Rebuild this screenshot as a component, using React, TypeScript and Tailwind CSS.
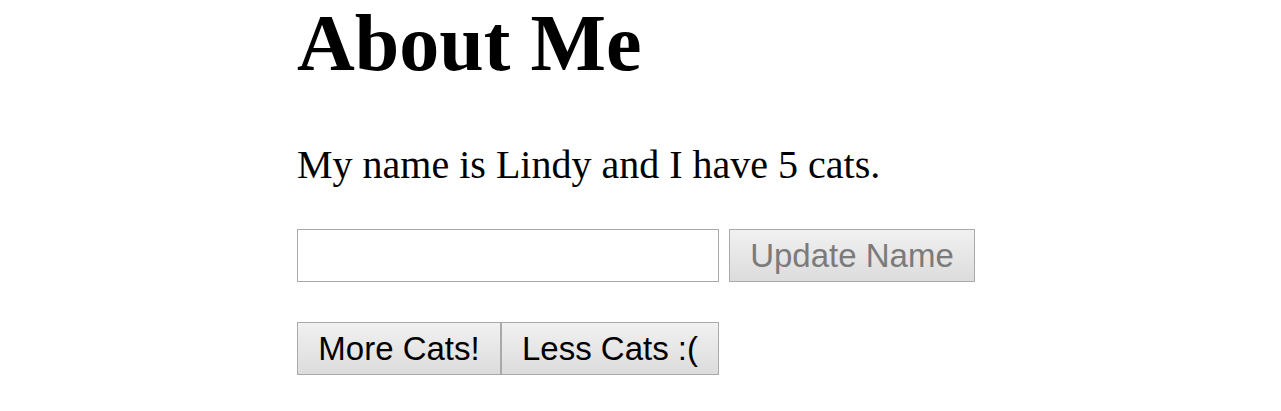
import React, { useState } from 'react';

const serif = "font-['Liberation_Serif','Times_New_Roman',serif]";
const sans = "font-['Liberation_Sans',Arial,sans-serif]";

const btn =
  "flex items-center justify-center h-[53px] border border-[#a9a9a9] bg-gradient-to-b from-[#f1f1f1] to-[#dcdcdc] text-[33px] leading-none";

const App: React.FC = () => {
  const [name, setName] = useState('Lindy');
  const [cats, setCats] = useState(5);
  const [draft, setDraft] = useState('');

  return (
    <div className="min-h-[411px] bg-white pl-[297px] text-black">
      <h1 className={`${serif} mt-[3px] text-[80px] font-bold leading-[80px]`}>About Me</h1>

      <p className={`${serif} mt-[60px] text-[40px] leading-[44px]`}>
        My name is {name} and I have {cats} cats.
      </p>

      <div className="mt-[42px] flex items-start gap-[10px]">
        <input
          value={draft}
          onChange={(e) => setDraft(e.target.value)}
          className="h-[53px] w-[422px] border border-[#a9a9a9] bg-white px-2 text-[33px] outline-none"
        />
        <button
          disabled={!draft}
          onClick={() => {
            setName(draft);
            setDraft('');
          }}
          className={`${btn} ${sans} w-[246px] text-[#7b7b7b]`}
        >
          Update Name
        </button>
      </div>

      <div className="mt-[40px] flex">
        <button onClick={() => setCats(cats + 1)} className={`${btn} ${sans} w-[204px]`}>
          More Cats!
        </button>
        <button onClick={() => setCats(cats - 1)} className={`${btn} ${sans} w-[218px]`}>
          Less Cats :(
        </button>
      </div>
    </div>
  );
};

export default App;
